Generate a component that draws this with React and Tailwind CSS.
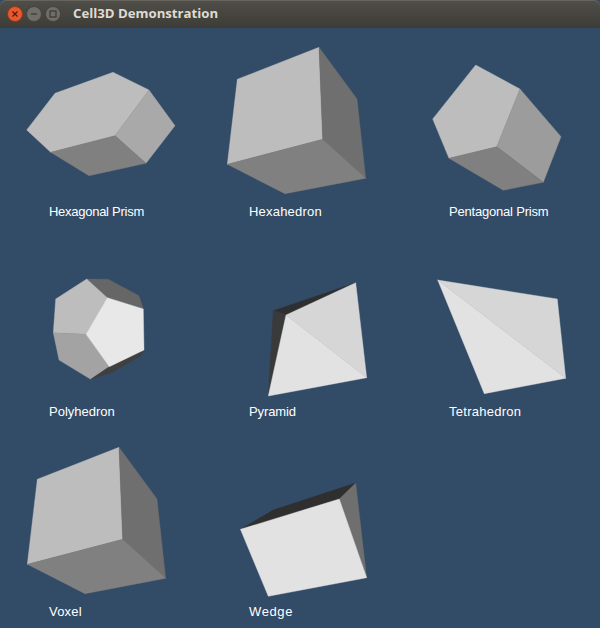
import React from 'react';

const hexahedronFaces = (dx, dy) => [
  { fill: '#bdbdbd', pts: [[237.3, 79.3], [319, 47.3], [322.7, 139.3], [227.3, 164.3]] },
  { fill: '#6f6f6f', pts: [[319, 47.3], [357, 99], [365.7, 178.3], [322.7, 139.3]] },
  { fill: '#808080', pts: [[227.3, 164.3], [322.7, 139.3], [365.7, 178.3], [285, 193.7]] },
].map((f) => ({ ...f, pts: f.pts.map(([x, y]) => [x + dx, y + dy]) }));

// points are in window coordinates, the viewBox of each cell shifts them
const cells = [
  {
    name: 'Hexagonal Prism',
    track: 'tracking-[-0.27px]',
    faces: [
      { fill: '#bdbdbd', pts: [[26.7, 130], [55, 93.3], [113, 72.3], [149, 90], [115, 135.7], [50.7, 152.3]] },
      { fill: '#a9a9a9', pts: [[149, 90], [175, 125.7], [146, 163.3], [115, 135.7]] },
      { fill: '#808080', pts: [[50.7, 152.3], [115, 135.7], [146, 163.3], [89, 175.7]] },
    ],
  },
  { name: 'Hexahedron', track: 'tracking-[0.2px]', faces: hexahedronFaces(0, 0) },
  {
    name: 'Pentagonal Prism',
    track: 'tracking-[-0.2px]',
    faces: [
      { fill: '#bdbdbd', pts: [[475.7, 65], [520, 89], [496.7, 146.7], [449, 158.3], [432.7, 119]] },
      { fill: '#9c9c9c', pts: [[520, 89], [561, 136.7], [543.3, 182.3], [496.7, 146.7]] },
      { fill: '#808080', pts: [[449, 158.3], [496.7, 146.7], [543.3, 182.3], [503.3, 190.3]] },
    ],
  },
  {
    name: 'Polyhedron',
    track: 'tracking-normal',
    faces: [
      { fill: '#666666', pts: [[86.7, 279], [108.3, 279.3], [139, 295.7], [143.3, 309], [107.3, 297.7]] },
      { fill: '#bdbdbd', pts: [[86.7, 279], [107.3, 297.7], [86, 334.3], [53.3, 332.7], [55.7, 299]] },
      { fill: '#a3a3a3', pts: [[53.3, 332.7], [86, 334.3], [109.3, 366.7], [90.7, 379.3], [59, 360]] },
      { fill: '#3f3f3f', pts: [[90.7, 379.3], [109.3, 366.7], [144, 350], [140.7, 355.7], [113.3, 371.7]] },
      { fill: '#e8e8e8', pts: [[107.3, 297.7], [143.3, 309], [144, 350], [109.3, 366.7], [86, 334.3]] },
    ],
  },
  {
    name: 'Pyramid',
    track: 'tracking-[-0.1px]',
    faces: [
      { fill: '#2f2f2f', pts: [[273.3, 310.7], [355.7, 282.7], [286, 315]] },
      { fill: '#3a3a3a', pts: [[273.3, 310.7], [286, 315], [268.3, 396]] },
      { fill: '#d6d6d6', pts: [[286, 315], [355.7, 282.7], [366.7, 377.7]] },
      { fill: '#e2e2e2', pts: [[286, 315], [366.7, 377.7], [268.3, 396]] },
    ],
  },
  {
    name: 'Tetrahedron',
    track: 'tracking-[0.27px]',
    faces: [
      { fill: '#d6d6d6', pts: [[437.7, 280], [557.3, 299], [565.7, 378.3]] },
      { fill: '#e2e2e2', pts: [[437.7, 280], [565.7, 378.3], [484.3, 393.7]] },
    ],
  },
  { name: 'Voxel', track: 'tracking-[0.2px]', faces: hexahedronFaces(-200, 400) },
  {
    name: 'Wedge',
    track: 'tracking-[0.6px]',
    faces: [
      { fill: '#2f2f2f', pts: [[240.4, 529.3], [273.3, 510], [355.7, 483], [339.3, 499]] },
      { fill: '#6f6f6f', pts: [[339.3, 499], [355.7, 483], [366.7, 577.7]] },
      { fill: '#e2e2e2', pts: [[240.4, 529.3], [339.3, 499], [366.7, 577.7], [268.3, 596.3]] },
    ],
  },
];

function Cell({ name, track, faces, index }) {
  const x0 = (index % 3) * 200;
  const y0 = Math.floor(index / 3) * 200 + 28;
  return (
    <div className="flex h-[200px] w-[200px] flex-col">
      <svg width="200" height="175" viewBox={`${x0} ${y0} 200 175`} className="block shrink-0">
        {faces.map((f, i) => (
          <polygon
            key={i}
            fill={f.fill}
            stroke={f.fill}
            strokeWidth="0.4"
            strokeLinejoin="round"
            points={f.pts.map((p) => p.join(',')).join(' ')}
          />
        ))}
      </svg>
      <span className={`pl-[49px] text-[13px] leading-[18px] text-white font-['Liberation_Sans',sans-serif] ${track}`}>
        {name}
      </span>
    </div>
  );
}

function WindowButton({ className, children }) {
  return (
    <div className={`flex h-[16px] w-[16px] items-center justify-center rounded-full ${className}`}>
      <svg width="10" height="10" viewBox="0 0 10 10" fill="none" strokeWidth="1.2">
        {children}
      </svg>
    </div>
  );
}

export default function App() {
  return (
    <div className="h-[628px] w-[600px] overflow-hidden bg-[#324b66]">
      <div className="flex h-[28px] items-center rounded-t-[6px] bg-gradient-to-b from-[#504e48] to-[#3d3c37] pl-[7px] shadow-[inset_0_1px_0_#66645d]">
        <div className="flex items-center gap-[3px]">
          <WindowButton className="bg-[#e8582c] border border-[#8c3a1e]">
            <path d="M2.5 2.5l5 5M7.5 2.5l-5 5" stroke="#4a1d10" />
          </WindowButton>
          <WindowButton className="bg-[#6f6e68] border border-[#45443f]">
            <path d="M2 5h6" stroke="#3a3935" />
          </WindowButton>
          <WindowButton className="bg-[#6f6e68] border border-[#45443f]">
            <rect x="2" y="2" width="6" height="6" stroke="#3a3935" />
          </WindowButton>
        </div>
        <span className="ml-[12px] text-[13.2px] font-bold text-[#dfdbd2] font-['Open_Sans',sans-serif]">
          Cell3D Demonstration
        </span>
      </div>
      <div className="grid grid-cols-[200px_200px_200px]">
        {cells.map((c, i) => (
          <Cell key={c.name} name={c.name} track={c.track} faces={c.faces} index={i} />
        ))}
      </div>
    </div>
  );
}
